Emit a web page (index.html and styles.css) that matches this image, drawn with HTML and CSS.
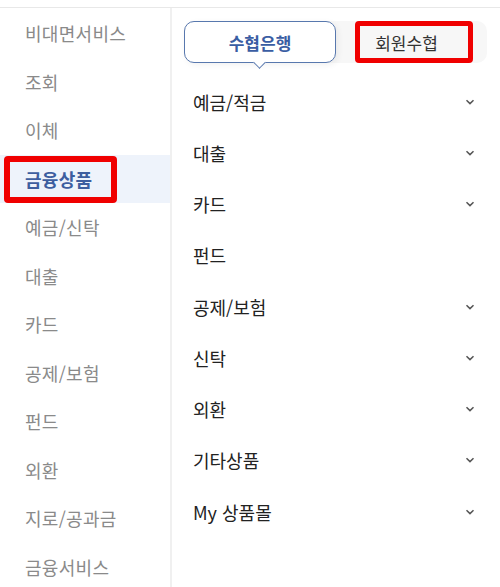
FILE: index.html
```html
<!DOCTYPE html>
<html lang="ko">
<head>
<meta charset="utf-8">
<link rel="stylesheet" href="styles.css">
</head>
<body>
<div class="topbar"></div>
<div class="layout">
  <nav class="side">
    <div class="side-item">비대면서비스</div>
    <div class="side-item">조회</div>
    <div class="side-item">이체</div>
    <div class="side-item active"><span class="mark mark-side"></span>금융상품</div>
    <div class="side-item">예금/신탁</div>
    <div class="side-item">대출</div>
    <div class="side-item">카드</div>
    <div class="side-item">공제/보험</div>
    <div class="side-item">펀드</div>
    <div class="side-item">외환</div>
    <div class="side-item">지로/공과금</div>
    <div class="side-item">금융서비스</div>
  </nav>
  <main class="main">
    <div class="tabs">
      <div class="tab tab-on">수협은행<span class="tail"></span></div>
      <div class="tab tab-off"><span class="mark mark-tab"></span>회원수협</div>
    </div>
    <ul class="menu">
      <li class="menu-item"><span>예금/적금</span><svg class="chev" viewBox="0 0 10 6"><path d="M1.5 1.2 L5 4.6 L8.5 1.2"/></svg></li>
      <li class="menu-item"><span>대출</span><svg class="chev" viewBox="0 0 10 6"><path d="M1.5 1.2 L5 4.6 L8.5 1.2"/></svg></li>
      <li class="menu-item"><span>카드</span><svg class="chev" viewBox="0 0 10 6"><path d="M1.5 1.2 L5 4.6 L8.5 1.2"/></svg></li>
      <li class="menu-item"><span>펀드</span></li>
      <li class="menu-item"><span>공제/보험</span><svg class="chev" viewBox="0 0 10 6"><path d="M1.5 1.2 L5 4.6 L8.5 1.2"/></svg></li>
      <li class="menu-item"><span>신탁</span><svg class="chev" viewBox="0 0 10 6"><path d="M1.5 1.2 L5 4.6 L8.5 1.2"/></svg></li>
      <li class="menu-item"><span>외환</span><svg class="chev" viewBox="0 0 10 6"><path d="M1.5 1.2 L5 4.6 L8.5 1.2"/></svg></li>
      <li class="menu-item"><span>기타상품</span><svg class="chev" viewBox="0 0 10 6"><path d="M1.5 1.2 L5 4.6 L8.5 1.2"/></svg></li>
      <li class="menu-item"><span>My 상품몰</span><svg class="chev" viewBox="0 0 10 6"><path d="M1.5 1.2 L5 4.6 L8.5 1.2"/></svg></li>
    </ul>
  </main>
</div>
</body>
</html>
```

FILE: styles.css
```css
html, body {
  margin: 0;
  padding: 0;
  background: #ffffff;
  font-family: "Noto Sans CJK KR", "Noto Sans", sans-serif;
}
.topbar {
  height: 7px;
  border-bottom: 1px solid #e8e8e8;
}
.layout {
  display: flex;
  height: 579px;
}
.side {
  width: 170px;
  flex: none;
  border-right: 2px solid #f0f0f0;
  padding-top: 1px;
}
.side-item {
  position: relative;
  height: 48.5px;
  display: flex;
  align-items: center;
  padding-left: 25px;
  font-size: 18px;
  color: #8a8a8a;
  letter-spacing: 0.3px;
}
.side-item.active {
  background: #eef3fb;
  color: #3d5e9f;
  font-weight: 700;
}
.mark {
  position: absolute;
  border: 6px solid #f00000;
  border-radius: 4px;
  box-sizing: border-box;
}
.mark-side {
  left: 4px;
  top: 1px;
  width: 113px;
  height: 47px;
}
.main {
  flex: 1;
}
.tabs {
  display: flex;
  margin: 13px 0 0 12px;
  width: 303px;
  height: 42px;
  background: #f7f7f7;
  border-radius: 10px;
}
.tab {
  position: relative;
  flex: 1;
  display: flex;
  align-items: center;
  justify-content: center;
  font-size: 17px;
  box-sizing: border-box;
}
.tab-on {
  flex: none;
  width: 152px;
  background: #ffffff;
  border: 1px solid #5878ae;
  border-radius: 10px;
  color: #3a5da3;
  font-weight: 700;
  box-shadow: 2px 2px 6px rgba(0, 0, 0, 0.06);
}
.tail {
  position: absolute;
  left: 70px;
  bottom: -5px;
  width: 8px;
  height: 8px;
  background: #ffffff;
  border-right: 1px solid #5878ae;
  border-bottom: 1px solid #5878ae;
  transform: rotate(45deg);
}
.tab-off {
  color: #333333;
  padding-right: 10px;
}
.mark-tab {
  left: 19px;
  top: 0;
  width: 118px;
  height: 42px;
  border-width: 5px;
}
.menu {
  list-style: none;
  margin: 13px 0 0 0;
  padding: 0;
}
.menu-item {
  height: 51.25px;
  display: flex;
  align-items: center;
  justify-content: space-between;
  padding: 0 25px 0 21px;
  font-size: 18px;
  color: #222222;
}
.chev {
  width: 10px;
  height: 6px;
  fill: none;
  stroke: #555555;
  stroke-width: 1.5;
}
```
